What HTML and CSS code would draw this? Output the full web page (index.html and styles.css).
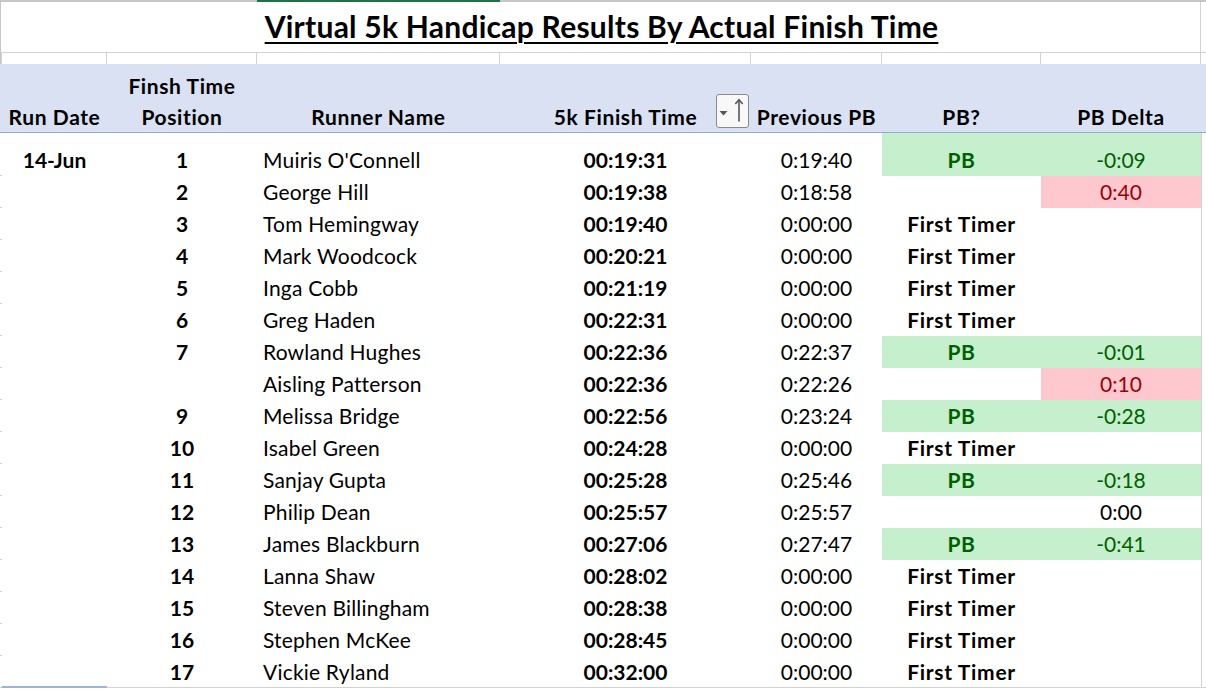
FILE: index.html
```html
<!DOCTYPE html>
<html>
<head>
<meta charset="utf-8">
<link rel="stylesheet" href="styles.css">
</head>
<body>
<div class="sheet">
  <div class="row strip">
    <div></div><div></div><div></div><div class="sel"></div><div></div><div></div><div></div><div></div><div></div>
  </div>
  <div class="row title-row">
    <div class="edge"></div>
    <div class="title"><span>Virtual 5k Handicap Results By Actual Finish Time</span></div>
    <div class="tail"></div>
  </div>
  <div class="row spacer">
    <div class="edge"></div><div></div><div></div><div></div><div></div><div></div><div></div><div></div><div class="tail"></div>
  </div>
  <div class="row head">
    <div></div>
    <div class="c">Run Date</div>
    <div class="c">Finsh Time<br>Position</div>
    <div class="c">Runner Name</div>
    <div class="c filter-cell">5k Finish Time
      <span class="filter">
        <svg width="33" height="34" viewBox="0 0 33 34">
          <path d="M3.5 17 L11.5 17 L7.5 21.5 Z" fill="#555"/>
          <path d="M23 27.5 L23 6" stroke="#555" stroke-width="1.6" fill="none"/>
          <path d="M19.3 10 L23 5.8 L26.7 10" stroke="#555" stroke-width="1.6" fill="none"/>
        </svg>
      </span>
    </div>
    <div class="c">Previous PB</div>
    <div class="c">PB?</div>
    <div class="c">PB Delta</div>
    <div></div>
  </div>

  <div class="row data first">
    <div class="edge"></div><div class="c b">14-Jun</div><div class="c b">1</div><div class="name">Muiris O'Connell</div><div class="c b">00:19:31</div><div class="c">0:19:40</div><div class="c b ls good">PB</div><div class="c good">-0:09</div><div class="tail"></div>
  </div>
  <div class="row data">
    <div class="edge"></div><div></div><div class="c b">2</div><div class="name">George Hill</div><div class="c b">00:19:38</div><div class="c">0:18:58</div><div></div><div class="c bad">0:40</div><div class="tail"></div>
  </div>
  <div class="row data">
    <div class="edge"></div><div></div><div class="c b">3</div><div class="name">Tom Hemingway</div><div class="c b">00:19:40</div><div class="c">0:00:00</div><div class="c b ls">First Timer</div><div></div><div class="tail"></div>
  </div>
  <div class="row data">
    <div class="edge"></div><div></div><div class="c b">4</div><div class="name">Mark Woodcock</div><div class="c b">00:20:21</div><div class="c">0:00:00</div><div class="c b ls">First Timer</div><div></div><div class="tail"></div>
  </div>
  <div class="row data">
    <div class="edge"></div><div></div><div class="c b">5</div><div class="name">Inga Cobb</div><div class="c b">00:21:19</div><div class="c">0:00:00</div><div class="c b ls">First Timer</div><div></div><div class="tail"></div>
  </div>
  <div class="row data">
    <div class="edge"></div><div></div><div class="c b">6</div><div class="name">Greg Haden</div><div class="c b">00:22:31</div><div class="c">0:00:00</div><div class="c b ls">First Timer</div><div></div><div class="tail"></div>
  </div>
  <div class="row data">
    <div class="edge"></div><div></div><div class="c b">7</div><div class="name">Rowland Hughes</div><div class="c b">00:22:36</div><div class="c">0:22:37</div><div class="c b ls good">PB</div><div class="c good">-0:01</div><div class="tail"></div>
  </div>
  <div class="row data">
    <div class="edge"></div><div></div><div class="c b"></div><div class="name">Aisling Patterson</div><div class="c b">00:22:36</div><div class="c">0:22:26</div><div></div><div class="c bad">0:10</div><div class="tail"></div>
  </div>
  <div class="row data">
    <div class="edge"></div><div></div><div class="c b">9</div><div class="name">Melissa Bridge</div><div class="c b">00:22:56</div><div class="c">0:23:24</div><div class="c b ls good">PB</div><div class="c good">-0:28</div><div class="tail"></div>
  </div>
  <div class="row data">
    <div class="edge"></div><div></div><div class="c b">10</div><div class="name">Isabel Green</div><div class="c b">00:24:28</div><div class="c">0:00:00</div><div class="c b ls">First Timer</div><div></div><div class="tail"></div>
  </div>
  <div class="row data">
    <div class="edge"></div><div></div><div class="c b">11</div><div class="name">Sanjay Gupta</div><div class="c b">00:25:28</div><div class="c">0:25:46</div><div class="c b ls good">PB</div><div class="c good">-0:18</div><div class="tail"></div>
  </div>
  <div class="row data">
    <div class="edge"></div><div></div><div class="c b">12</div><div class="name">Philip Dean</div><div class="c b">00:25:57</div><div class="c">0:25:57</div><div></div><div class="c">0:00</div><div class="tail"></div>
  </div>
  <div class="row data">
    <div class="edge"></div><div></div><div class="c b">13</div><div class="name">James Blackburn</div><div class="c b">00:27:06</div><div class="c">0:27:47</div><div class="c b ls good">PB</div><div class="c good">-0:41</div><div class="tail"></div>
  </div>
  <div class="row data">
    <div class="edge"></div><div></div><div class="c b">14</div><div class="name">Lanna Shaw</div><div class="c b">00:28:02</div><div class="c">0:00:00</div><div class="c b ls">First Timer</div><div></div><div class="tail"></div>
  </div>
  <div class="row data">
    <div class="edge"></div><div></div><div class="c b">15</div><div class="name">Steven Billingham</div><div class="c b">00:28:38</div><div class="c">0:00:00</div><div class="c b ls">First Timer</div><div></div><div class="tail"></div>
  </div>
  <div class="row data">
    <div class="edge"></div><div></div><div class="c b">16</div><div class="name">Stephen McKee</div><div class="c b">00:28:45</div><div class="c">0:00:00</div><div class="c b ls">First Timer</div><div></div><div class="tail"></div>
  </div>
  <div class="row data last">
    <div class="edge"></div><div class="selcell"></div><div class="c b">17</div><div class="name">Vickie Ryland</div><div class="c b">00:32:00</div><div class="c">0:00:00</div><div class="c b ls">First Timer</div><div></div><div class="tail"></div>
  </div>
</div>
</body>
</html>
```

FILE: styles.css
```css
html, body {
  margin: 0;
  padding: 0;
  background: #ffffff;
}

body {
  font-family: Lato, "Open Sans", "Liberation Sans", sans-serif;
  font-size: 21px;
  color: #000;
  overflow: hidden;
}

.sheet {
  width: 1206px;
}

.row {
  display: grid;
  grid-template-columns: 2px 105px 150px 243px 251px 131px 159px 160px 5px;
}

.strip {
  height: 2px;
  background: #c6c6c6;
}

.strip .sel {
  background: #1e7244;
}

.title-row {
  height: 51px;
  box-sizing: border-box;
  border-bottom: 1px solid #d2d2d2;
}

.title-row .edge {
  box-shadow: inset 1px 0 #c6c6c6;
}

.title {
  grid-column: 2 / 9;
  display: flex;
  align-items: center;
  justify-content: center;
  font-size: 30px;
  font-weight: 700;
  letter-spacing: 0.25px;
  box-shadow: inset -1px 0 #d2d2d2;
}

.title span {
  text-decoration: underline;
  text-decoration-thickness: 2px;
  text-underline-offset: 4px;
  position: relative;
  top: -1px;
}

.spacer {
  height: 11px;
}

.spacer > div {
  box-shadow: inset -1px 0 #d2d2d2;
}

.spacer .edge {
  box-shadow: inset 1px 0 #c6c6c6, inset -1px 0 #d2d2d2;
}

.spacer .tail {
  box-shadow: none;
}

.head {
  height: 69px;
  box-sizing: border-box;
  background: #d9e1f2;
  border-bottom: 1px solid #8eaadb;
  font-weight: 700;
  line-height: 31px;
  letter-spacing: 0.6px;
}

.head > div {
  display: flex;
  align-items: flex-end;
  justify-content: center;
  text-align: center;
}

.filter-cell {
  position: relative;
}

.filter {
  position: absolute;
  right: 2px;
  top: 30px;
  width: 33px;
  height: 34px;
  box-sizing: border-box;
  border: 1.5px solid #8a8a8a;
  border-radius: 3px;
  background: #f8f8f8;
  display: block;
  line-height: 0;
}

.filter svg {
  position: absolute;
  left: -1.5px;
  top: -1.5px;
}

.data {
  height: 32px;
  line-height: 32px;
}

.data.first {
  height: 43px;
}

.data > div {
  display: flex;
  align-items: flex-end;
}

.data .edge {
  box-shadow: inset 0 -1px #d2d2d2;
}

.data .tail {
  box-shadow: inset 1px 0 #d2d2d2;
}

.data.last .edge,
.data.last > div {
  box-shadow: inset 0 -1px #d2d2d2;
}

.data.last .tail {
  box-shadow: inset 1px 0 #d2d2d2, inset 0 -1px #d2d2d2;
}

.data.last .selcell {
  box-shadow: inset 0 -2px #9db4dc;
}

.c {
  justify-content: center;
}

.b {
  font-weight: 700;
}

.ls {
  letter-spacing: 0.7px;
}

.name {
  padding-left: 6px;
  letter-spacing: 0.2px;
}

.good {
  background: #c6efce;
  color: #006100;
}

.bad {
  background: #ffc7ce;
  color: #9c0006;
}
```
